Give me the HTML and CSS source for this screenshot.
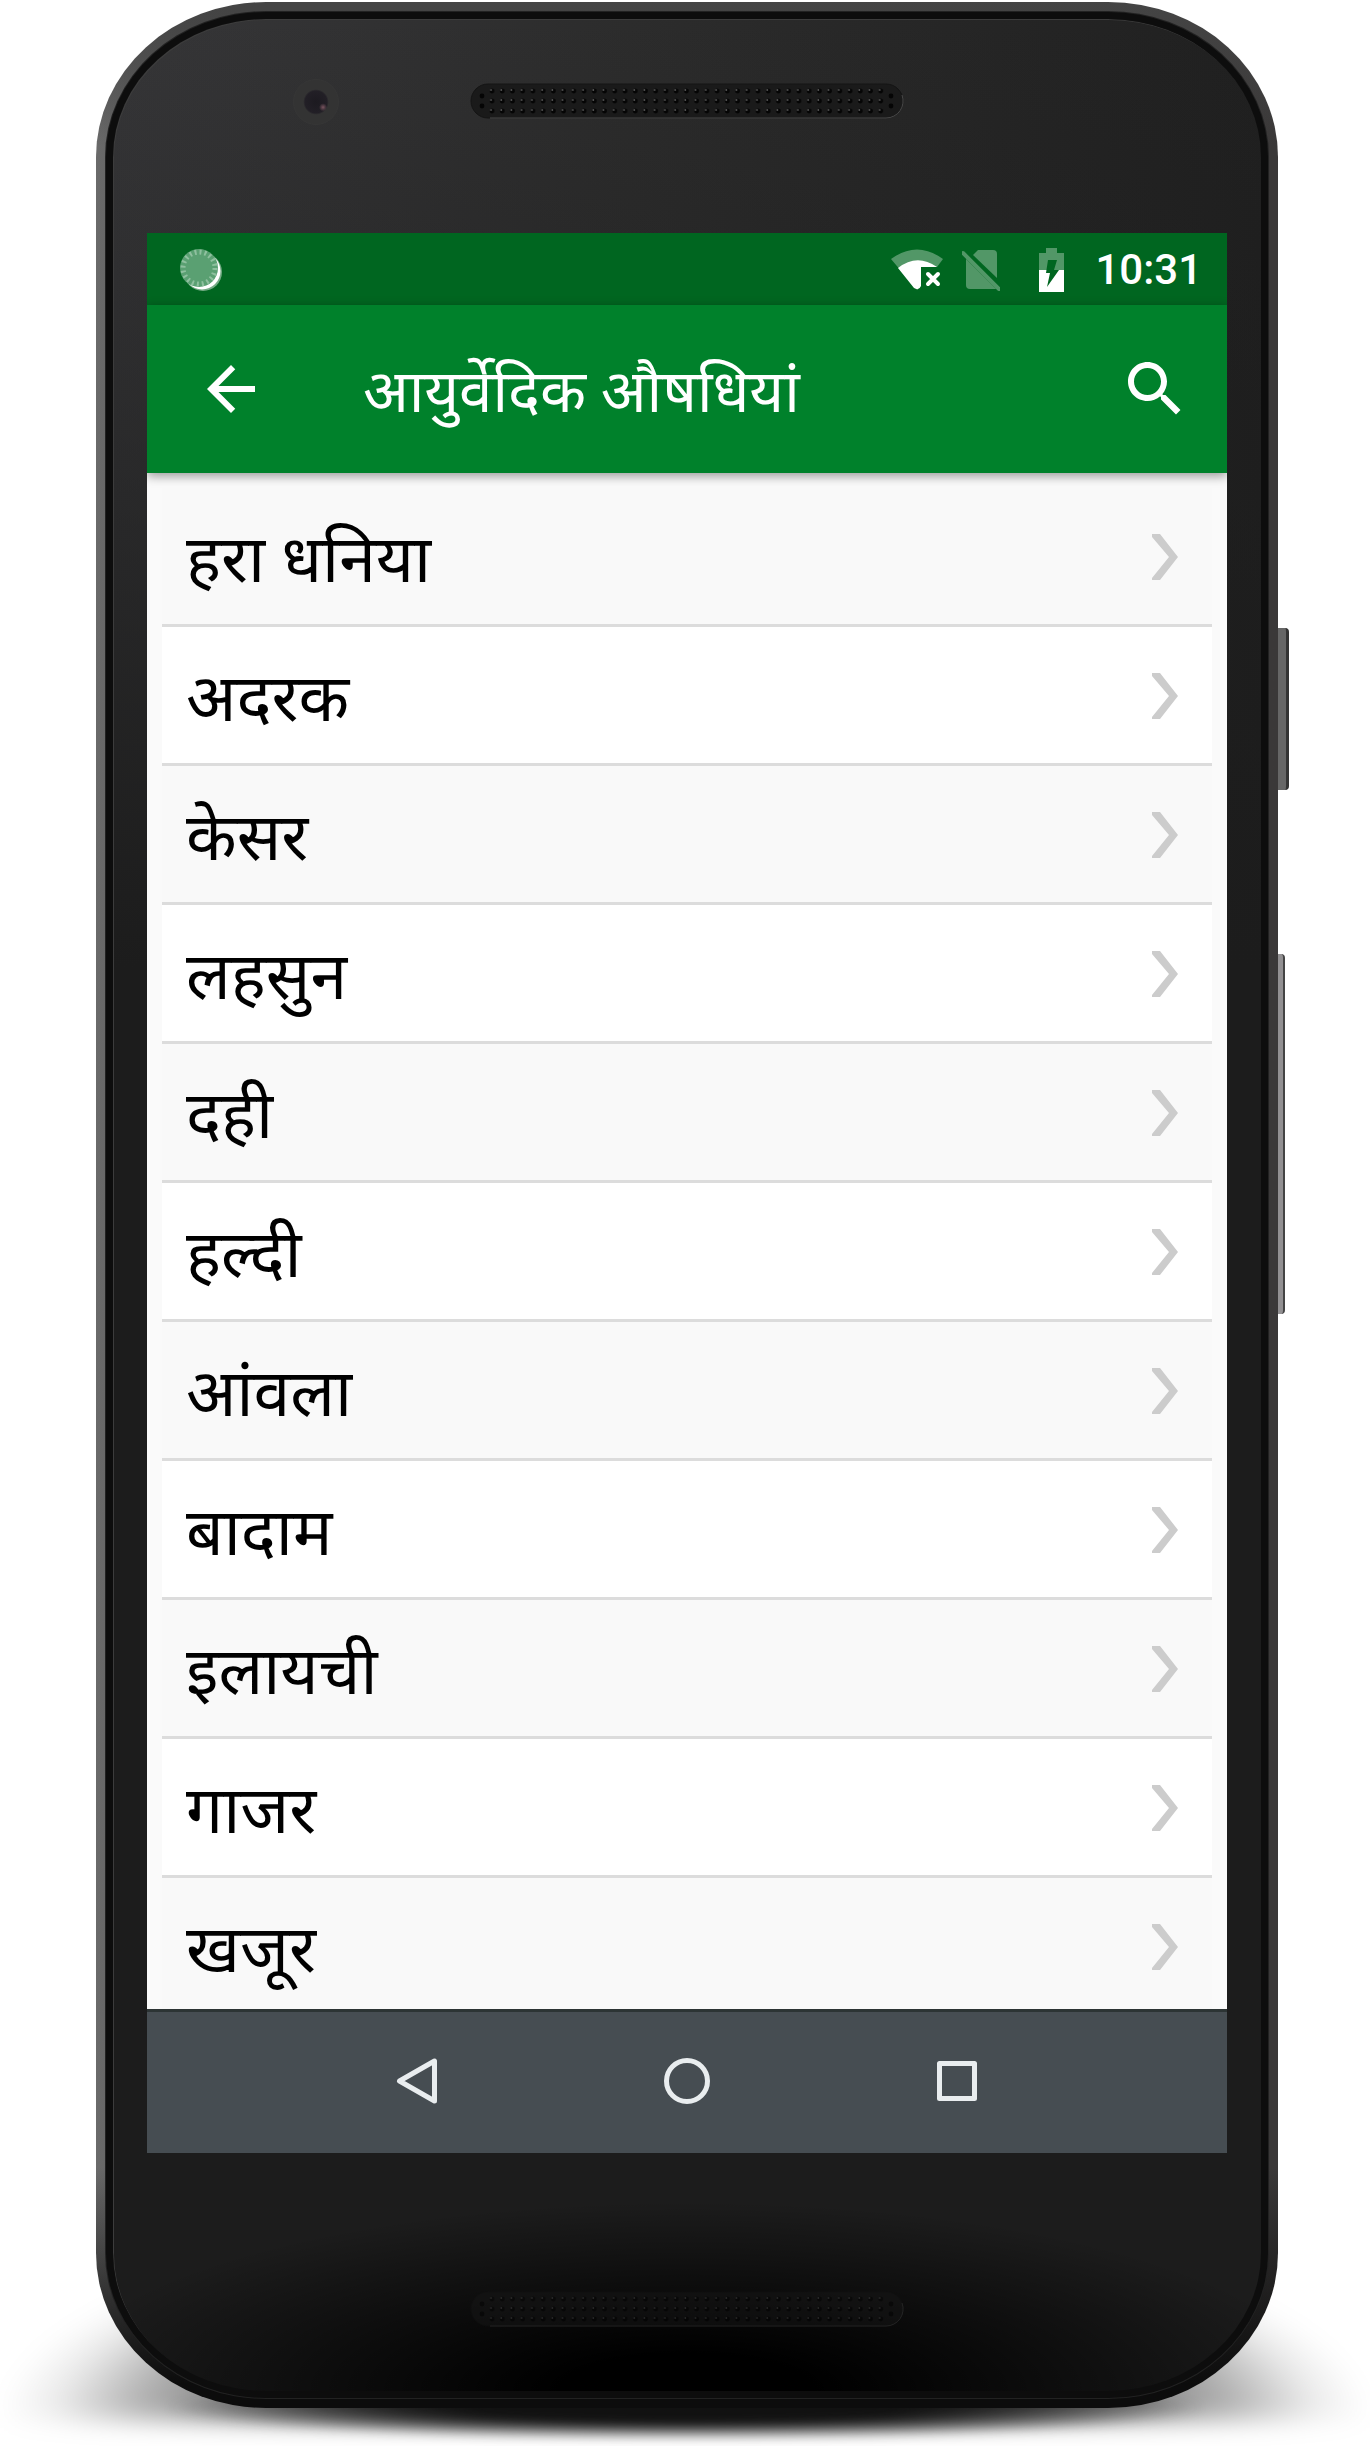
FILE: index.html
```html
<!DOCTYPE html>
<html lang="hi">
<head>
    <meta charset="UTF-8">
    <meta name="viewport" content="width=device-width, initial-scale=1.0">
    <title>आयुर्वेदिक औषधियां</title>
    <link rel="stylesheet" href="styles.css">
</head>
<body>
    <svg class="defs" width="0" height="0" aria-hidden="true">
        <defs>
            <pattern id="holes" x="17" y="3" width="10.23" height="10" patternUnits="userSpaceOnUse">
                <circle cx="5" cy="5" r="2.4" fill="#050505"/>
                <circle cx="4" cy="4" r="0.9" fill="#5a5a5a"/>
            </pattern>
            <symbol id="grille" viewBox="0 0 434 36">
                <rect x="1" y="1" width="432" height="34" rx="17" fill="#1a1a1a" stroke="#141414"/>
                <path d="M20 35H416A17 17 0 0 0 432 12" fill="none" stroke="#4a4a4a"/>
                <rect x="17" y="3" width="399" height="30" fill="url(#holes)"/>
                <circle cx="12" cy="13" r="2.4" fill="#050505"/>
                <circle cx="12" cy="23" r="2.4" fill="#050505"/>
                <circle cx="421" cy="13" r="2.4" fill="#050505"/>
                <circle cx="421" cy="23" r="2.4" fill="#050505"/>
            </symbol>
            <symbol id="chevron" viewBox="0 0 26 46">
                <path d="M0 0H8L26 23L8 46H0V44L17 23L0 3Z" fill="#ccc"/>
            </symbol>
        </defs>
    </svg>

    <div class="stage">
        <div class="phone">
            <span class="side-button power"></span>
            <span class="side-button volume"></span>
            <div class="bezel">
                <div class="face">
                    <div class="forehead">
                        <span class="camera"></span>
                        <svg class="grille"><use href="#grille"/></svg>
                    </div>

                    <div class="screen">
                        <div class="status-bar">
                            <svg class="spinner" viewBox="0 0 44 44">
                                <circle cx="24" cy="24" r="19" fill="#fff" fill-opacity=".45"/>
                                <circle cx="23" cy="23" r="18.500" fill="#fff"/>
                                <circle cx="20" cy="20" r="19" fill="#5aa072"/>
                                <circle cx="20" cy="20" r="16" fill="none" stroke="#8fc09f" stroke-width="5" stroke-dasharray="2 3.030"/>
                            </svg>
                            <div class="status-icons">
                                <svg class="wifi" viewBox="0 0 52 42">
                                    <path d="M0 10Q26 -9 52 10L46 18H30V36L26 41Z" fill="#fff" fill-opacity=".32"/>
                                    <path d="M7 19Q26 4 46 18H30V37Q28 42 23 39Z" fill="#fff"/>
                                    <path d="M37 25L47 35M47 25L37 35" stroke="#fff" stroke-width="4" stroke-linecap="round"/>
                                </svg>
                                <svg class="sim" viewBox="0 0 38 42">
                                    <path d="M16 1H31Q35 1 35 5V29L11 6Z" fill="#fff" fill-opacity=".32"/>
                                    <path d="M4 10L34 40H8Q4 40 4 36Z" fill="#fff" fill-opacity=".32"/>
                                    <path d="M1 4L37 40" stroke="#fff" stroke-opacity=".32" stroke-width="4" stroke-linecap="round"/>
                                </svg>
                                <svg class="battery" viewBox="0 0 26 44">
                                    <path d="M7 0H18V5H25V22H0V5H7Z" fill="#fff" fill-opacity=".32"/>
                                    <path d="M0 22H25V44H0Z" fill="#fff"/>
                                    <path d="M9 12H18L15 22H20L8 39L11 25H7Z" fill="#006620"/>
                                </svg>
                                <span class="clock">10:31</span>
                            </div>
                        </div>

                        <header class="toolbar">
                            <button type="button" class="icon-button" aria-label="वापस">
                                <svg viewBox="0 0 24 24"><path d="M20 11H7.830l5.590-5.590L12 4l-8 8 8 8 1.410-1.410L7.830 13H20v-2z"/></svg>
                            </button>
                            <h1>आयुर्वेदिक औषधियां</h1>
                            <button type="button" class="icon-button" aria-label="खोजें">
                                <svg viewBox="0 0 24 24"><path d="M15.500 14h-.79l-.28-.27C15.410 12.590 16 11.110 16 9.500 16 5.910 13.090 3 9.500 3S3 5.910 3 9.500 5.910 16 9.500 16c1.610 0 3.090-.59 4.230-1.570l.27.28v.79l5 4.990L20.490 19l-4.990-5zm-6 0C7.010 14 5 11.990 5 9.500S7.010 5 9.500 5 14 7.010 14 9.500 11.990 14 9.500 14z"/></svg>
                            </button>
                        </header>

                        <ul class="herbs">
                            <li><a href="#"><span>हरा धनिया</span><svg class="chevron"><use href="#chevron"/></svg></a></li>
                            <li><a href="#"><span>अदरक</span><svg class="chevron"><use href="#chevron"/></svg></a></li>
                            <li><a href="#"><span>केसर</span><svg class="chevron"><use href="#chevron"/></svg></a></li>
                            <li><a href="#"><span>लहसुन</span><svg class="chevron"><use href="#chevron"/></svg></a></li>
                            <li><a href="#"><span>दही</span><svg class="chevron"><use href="#chevron"/></svg></a></li>
                            <li><a href="#"><span>हल्दी</span><svg class="chevron"><use href="#chevron"/></svg></a></li>
                            <li><a href="#"><span>आंवला</span><svg class="chevron"><use href="#chevron"/></svg></a></li>
                            <li><a href="#"><span>बादाम</span><svg class="chevron"><use href="#chevron"/></svg></a></li>
                            <li><a href="#"><span>इलायची</span><svg class="chevron"><use href="#chevron"/></svg></a></li>
                            <li><a href="#"><span>गाजर</span><svg class="chevron"><use href="#chevron"/></svg></a></li>
                            <li><a href="#"><span>खजूर</span><svg class="chevron"><use href="#chevron"/></svg></a></li>
                        </ul>

                        <nav class="nav-bar">
                            <button type="button" aria-label="Back">
                                <svg viewBox="0 0 48 48"><path d="M6.500 24L41.500 4V44Z"/></svg>
                            </button>
                            <button type="button" aria-label="Home">
                                <svg viewBox="0 0 48 48"><circle cx="24" cy="24" r="20.500"/></svg>
                            </button>
                            <button type="button" aria-label="Overview">
                                <svg viewBox="0 0 48 48"><rect x="6.500" y="6.500" width="35" height="35"/></svg>
                            </button>
                        </nav>
                    </div>

                    <div class="chin">
                        <svg class="grille"><use href="#grille"/></svg>
                    </div>
                </div>
            </div>
        </div>
    </div>
</body>
</html>
```
FILE: styles.css
```css
:root {
    --green: #00812b;
    --green-dark: #006620;
    --nav: #464d52;
    --line: #dcdcdc;
}

* {
    box-sizing: border-box;
}

body {
    margin: 0;
    background: #fff;
    font-family: Roboto, "Noto Sans", "Noto Sans Devanagari", sans-serif;
    overflow-x: hidden;
}

button {
    padding: 0;
    border: none;
    background: none;
    cursor: pointer;
}

.defs {
    position: absolute;
}

.stage {
    position: relative;
    padding: 2px 92px 38px 96px;
    overflow: hidden;
}

/* floor shadow */
.stage::before,
.stage::after {
    content: '';
    position: absolute;
    z-index: -1;
}

.stage::before {
    left: 0;
    right: 0;
    bottom: 26px;
    height: 210px;
    background: radial-gradient(ellipse 50% 100% at 50% 100%, #000 30%, rgba(0, 0, 0, 0.3) 80%, rgba(0, 0, 0, 0.08) 92%, transparent 100%);
    filter: blur(12px);
}

.stage::after {
    left: 12%;
    right: 12%;
    bottom: 6px;
    height: 64px;
    background: radial-gradient(ellipse 50% 50%, #111 40%, transparent 100%);
    filter: blur(5px);
}

/* phone body */
.phone {
    position: relative;
    padding: 10px;
    border-radius: 170px / 155px;
    background: linear-gradient(to bottom, #444 0, transparent 6%, transparent 90%, #0c0c0c 99%), linear-gradient(to right, #6a6a6a, #444 12%, #3a3838);
}

.bezel {
    padding: 7px;
    border-radius: 160px / 145px;
    background: #0d0d0d;
    box-shadow: 0 0 0 1px #222;
}

.face {
    padding: 0 34px;
    border-radius: 153px / 138px;
    background:
        radial-gradient(ellipse 56% 8% at 50% 100%, #000 20%, transparent 100%),
        linear-gradient(to bottom, transparent, #1c1c1c 40%),
        linear-gradient(to right, #363638, #2c2c2c 45%, #202020);
    box-shadow: inset 1px 1px 0 #3c3c3c;
}

.side-button {
    position: absolute;
    left: 100%;
    border-radius: 0 4px 4px 0;
}

.power {
    top: 626px;
    width: 11px;
    height: 162px;
    background: #666;
    border-right: 3px solid #333;
}

.volume {
    top: 952px;
    width: 7px;
    height: 360px;
    background: #929092;
    border-right: 2px solid #444;
}

.forehead {
    position: relative;
    display: flex;
    justify-content: center;
    height: 214px;
    padding-top: 64px;
}

.camera {
    position: absolute;
    left: 146px;
    top: 60px;
    width: 46px;
    height: 46px;
    border: 1px solid #363636;
    border-radius: 50%;
    background: radial-gradient(circle at 66% 62%, #7a5560 0, transparent 10%), radial-gradient(circle closest-side, #1c1a20 0, #221f26 50%, #333 58%);
}

.grille {
    width: 434px;
    height: 36px;
}

.chin {
    display: flex;
    justify-content: center;
    height: 238px;
    padding-top: 138px;
}

.chin .grille {
    opacity: 0.4;
}

/* screen */
.screen {
    display: flex;
    flex-direction: column;
    aspect-ratio: 9 / 16;
    overflow: hidden;
    background: #fafafa;
}

.status-bar {
    display: flex;
    flex: none;
    align-items: center;
    justify-content: space-between;
    height: 72px;
    padding: 2px 25px 0 32px;
    background: var(--green-dark);
    color: #fff;
}

.spinner {
    width: 44px;
    height: 44px;
}

.status-icons {
    display: flex;
    align-items: center;
}

.wifi {
    width: 52px;
    height: 42px;
    margin-right: 19px;
}

.sim {
    width: 38px;
    height: 42px;
    margin-right: 39px;
}

.battery {
    width: 26px;
    height: 44px;
    margin-right: 30px;
}

.clock {
    font-size: 42px;
    font-weight: 500;
    line-height: 70px;
}

.toolbar {
    position: relative;
    z-index: 1;
    display: flex;
    flex: none;
    align-items: center;
    height: 168px;
    padding: 0 36px 0 48px;
    background: var(--green);
    box-shadow: 0 3px 10px rgba(0, 0, 0, 0.4);
}

.toolbar h1 {
    flex: 1;
    margin: 0 0 0 96px;
    padding-top: 6px;
    color: #fff;
    font-size: 60px;
    font-weight: 400;
    line-height: 80px;
}

.icon-button svg {
    display: block;
    width: 72px;
    height: 72px;
    fill: #fff;
}

.herbs {
    flex: 1;
    min-height: 0;
    margin: 0;
    padding: 15px 15px 0;
    list-style: none;
    overflow: hidden;
}

.herbs a {
    display: flex;
    align-items: center;
    justify-content: space-between;
    height: 139px;
    padding: 2px 34px 0 24px;
    border-bottom: 3px solid var(--line);
    background: #f9f9f9;
    color: #000;
    font-size: 66px;
    line-height: 90px;
    text-decoration: none;
}

.herbs span {
    padding-top: 6px;
}

.herbs li:nth-child(even) a {
    background: #fff;
}

.chevron {
    width: 26px;
    height: 46px;
}

.nav-bar {
    display: flex;
    flex: none;
    height: 144px;
    padding: 0 12.5% 3px;
    border-top: 3px solid #2c3434;
    background: var(--nav);
}

.nav-bar button {
    display: flex;
    flex: 1;
    align-items: center;
    justify-content: center;
}

.nav-bar svg {
    width: 48px;
    height: 48px;
    fill: none;
    stroke: #e9edef;
    stroke-width: 5px;
    stroke-linejoin: round;
}
```
